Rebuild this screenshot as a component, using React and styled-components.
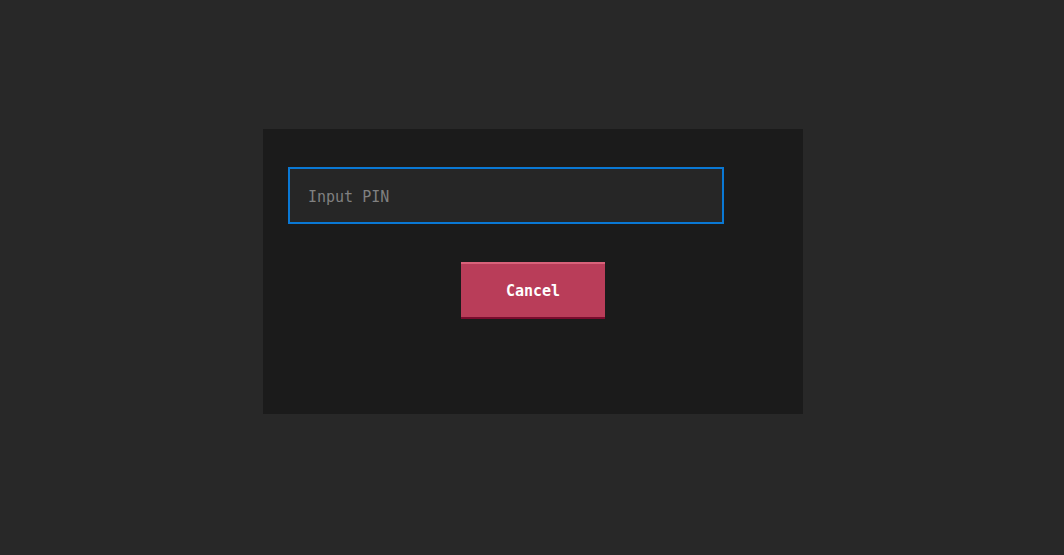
import React from 'react';
import styled, { createGlobalStyle } from 'styled-components';

export default function App() {
  return (
    <>
      <GlobalStyle />
      <Page>
        <Dialog>
          <PinInput type="password" placeholder="Input PIN" />
          <CancelButton>Cancel</CancelButton>
        </Dialog>
      </Page>
    </>
  );
}

const GlobalStyle = createGlobalStyle`
  html, body {
    margin: 0;
    padding: 0;
    background: #282828;
  }
  * { box-sizing: border-box; }
`;

const Page = styled.main`
  width: 100%;
  height: 555px;
  display: flex;
  flex-direction: column;
  align-items: center;
  justify-content: center;
  padding: 0 0 12px 2px;
  font-family: "DejaVu Sans Mono", "Liberation Mono", monospace;
`;

const Dialog = styled.section`
  width: 540px;
  height: 285px;
  background: #1b1b1b;
  padding: 38px 25px 0;
  display: flex;
  flex-direction: column;
  gap: 38px;
`;

const PinInput = styled.input`
  width: 436px;
  height: 57px;
  background: #262626;
  border: 2px solid #0a78d4;
  outline: none;
  padding: 2px 18px 0;
  color: #e0e0e0;
  font-family: inherit;
  font-size: 15px;

  &::placeholder {
    color: #808080;
  }
`;

const CancelButton = styled.button`
  align-self: center;
  width: 144px;
  height: 57px;
  background: #b93d59;
  border: none;
  border-top: 2px solid #d9627a;
  border-bottom: 2px solid #7a0c2e;
  color: #ffffff;
  font-family: inherit;
  font-size: 15px;
  font-weight: bold;
  cursor: pointer;
`;
